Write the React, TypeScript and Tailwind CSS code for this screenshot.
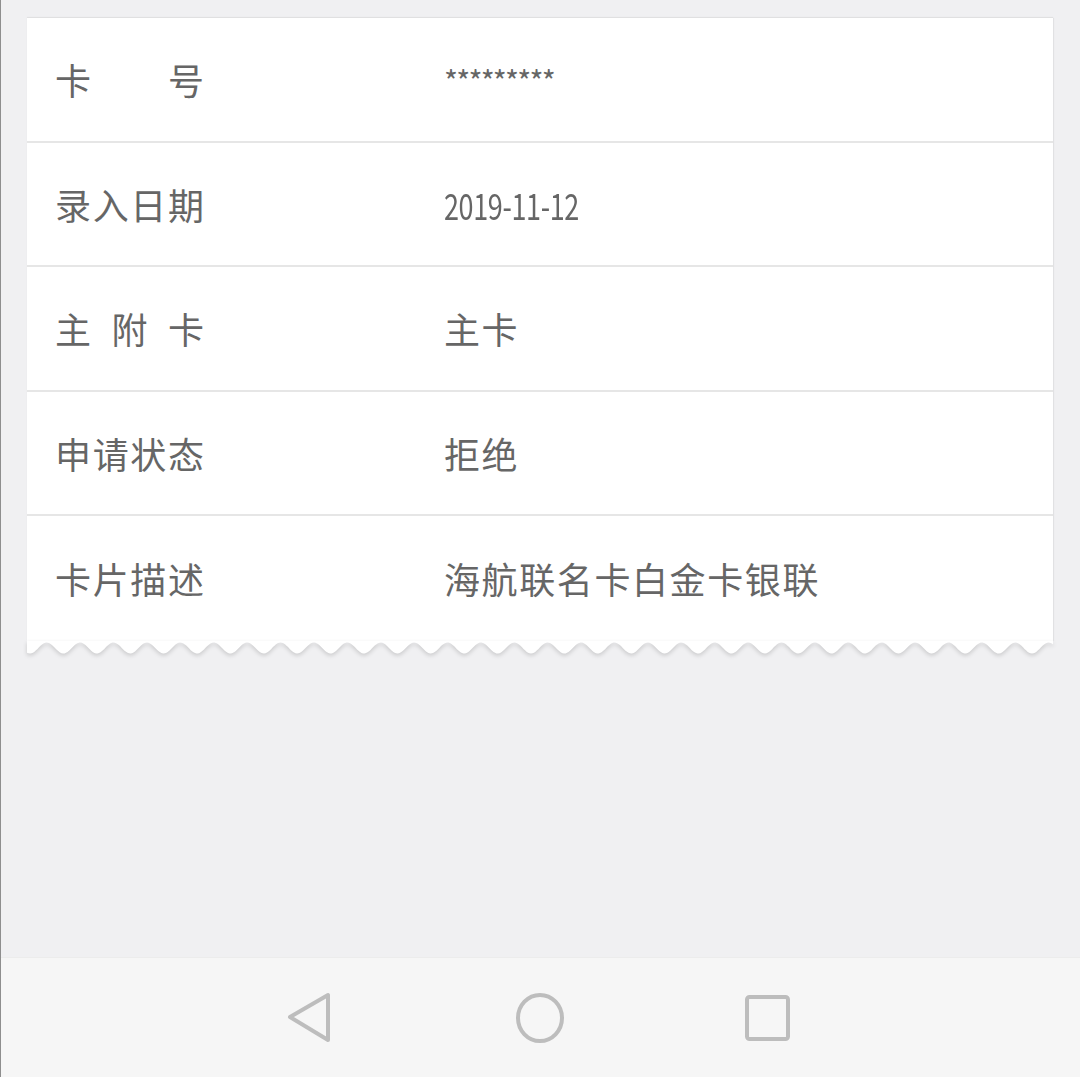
import React from "react";

const rows: { label: string[]; value: React.ReactNode }[] = [
  {
    label: ["卡", "号"],
    value: (
      <span className="relative -top-[2px] text-[30px] tracking-[-1.8px]">*********</span>
    ),
  },
  {
    label: ["录", "入", "日", "期"],
    value: (
      <span className="inline-block origin-left scale-x-[0.75] tracking-[-0.5px]">2019-11-12</span>
    ),
  },
  { label: ["主", "附", "卡"], value: "主卡" },
  { label: ["申", "请", "状", "态"], value: "拒绝" },
  { label: ["卡", "片", "描", "述"], value: "海航联名卡白金卡银联" },
];

function Wave() {
  // sine edge along the bottom of the card
  const w = 1026;
  const period = 33.4;
  let d = `M0 0 L${w} 0`;
  const pts: string[] = [];
  for (let x = w; x >= 0; x -= 1.5) {
    const y = 7 + 5.5 * Math.cos((2 * Math.PI * (x - 3)) / period);
    pts.push(`L${x.toFixed(1)} ${y.toFixed(2)}`);
  }
  d += " " + pts.join(" ") + " Z";
  return (
    <svg width={w} height={18} viewBox={`0 0 ${w} 18`} className="block drop-shadow-[0_2px_2px_rgba(0,0,0,0.16)]">
      <path d={d} fill="#ffffff" />
    </svg>
  );
}

export default function App() {
  return (
    <div
      className="flex h-[1077px] w-[1080px] flex-col overflow-hidden border-l border-[#8e8e8e] bg-[#f0f0f2] text-[#666666]"
      style={{ fontFamily: '"Noto Sans CJK SC", "Noto Sans", sans-serif' }}
    >
      <div className="flex-1 pt-[18px] pl-[26px] pr-[27px]">
        <div className="w-[1026px] shadow-[0_-1px_1px_rgba(0,0,0,0.06),1px_0_1px_rgba(0,0,0,0.05)]">
          {rows.map((r, i) => (
            <div
              key={i}
              className={`flex h-[124.5px] items-center bg-white pl-[28px] text-[36px] leading-none ${
                i < rows.length - 1 ? "border-b-2 border-[#e6e6e6]" : ""
              }`}
            >
              <div className="w-[389px] shrink-0">
                <div className="flex w-[149px] justify-between">
                  {r.label.map((c, j) => (
                    <span key={j}>{c}</span>
                  ))}
                </div>
              </div>
              <div className="whitespace-nowrap tracking-[1.6px]">{r.value}</div>
            </div>
          ))}
        </div>
        <Wave />
      </div>

      <div className="flex h-[120px] items-center border-t border-[#ececec] bg-[#f6f6f6]">
        <div className="flex w-full items-center">
          <div className="ml-[285px]">
            <svg width="48" height="52" viewBox="0 0 48 52">
              <path d="M4 25 L42 3 V48 Z" fill="none" stroke="#bdbdbd" strokeWidth="4" strokeLinejoin="round" />
            </svg>
          </div>
          <div className="ml-[180px]">
            <svg width="52" height="52" viewBox="0 0 52 52">
              <ellipse cx="26" cy="26" rx="22" ry="23" fill="none" stroke="#bdbdbd" strokeWidth="4" />
            </svg>
          </div>
          <div className="ml-[177px]">
            <svg width="50" height="50" viewBox="0 0 50 50">
              <rect x="4" y="4" width="41" height="42" rx="2.5" fill="none" stroke="#bdbdbd" strokeWidth="4" />
            </svg>
          </div>
        </div>
      </div>
    </div>
  );
}
